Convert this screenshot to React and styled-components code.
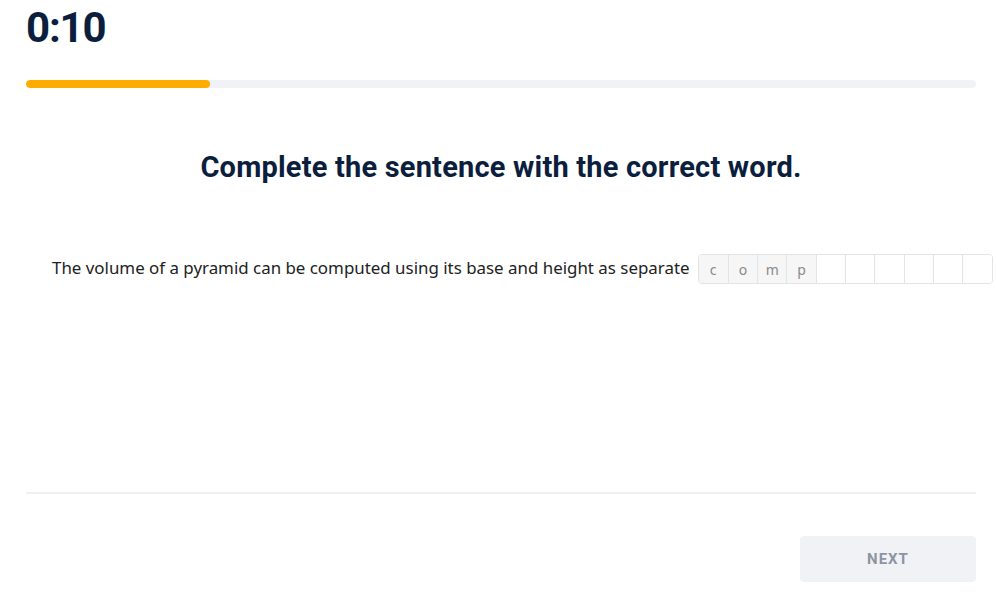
import React from 'react';
import styled, { createGlobalStyle } from 'styled-components';

const GlobalStyle = createGlobalStyle`
  html, body {
    margin: 0;
    padding: 0;
    background: #ffffff;
  }
  body {
    font-family: 'Noto Sans', 'Open Sans', sans-serif;
    overflow: hidden;
  }
`;

const Page = styled.div`
  width: 996px;
  height: 592px;
  box-sizing: border-box;
  padding: 0 20px 0 26px;
  display: flex;
  flex-direction: column;
`;

const Timer = styled.div`
  font-family: Roboto, 'Liberation Sans', sans-serif;
  font-weight: 700;
  font-size: 42px;
  line-height: 52px;
  letter-spacing: -1.2px;
  color: #0b1e3d;
  margin-top: 2px;
`;

const Track = styled.div`
  margin-top: 26px;
  height: 8px;
  border-radius: 4px;
  background: #f0f2f5;
  overflow: hidden;
`;

const Fill = styled.div`
  height: 100%;
  border-radius: 4px;
  background: #ffab00;
`;

const Heading = styled.h2`
  margin: 60px 0 0;
  text-align: center;
  font-family: Roboto, 'Liberation Sans', sans-serif;
  font-weight: 700;
  font-size: 29px;
  line-height: 38px;
  letter-spacing: 0.2px;
  color: #0b1e3d;
`;

const SentenceRow = styled.div`
  margin-top: 68px;
  padding-left: 26px;
  display: flex;
  align-items: center;
  gap: 8px;
  white-space: nowrap;
  height: 30px;
`;

const Sentence = styled.span`
  font-size: 16.9px;
  line-height: 26px;
  margin-top: -3px;
  color: #222;
`;

const Boxes = styled.div`
  display: flex;
  border: 1px solid #e4e4e4;
  border-radius: 4px;
  overflow: hidden;
  flex-shrink: 0;
`;

const LetterBox = styled.div`
  width: 29.3px;
  height: 28px;
  box-sizing: border-box;
  display: flex;
  align-items: center;
  justify-content: center;
  font-size: 14px;
  color: #8a8a8a;
  background: ${p => (p.$filled ? '#f6f6f6' : '#ffffff')};
  & + & {
    border-left: 1px solid #e4e4e4;
  }
`;

const Spacer = styled.div`
  flex: 1;
`;

const Divider = styled.hr`
  margin: 0;
  border: none;
  height: 2px;
  background: #eef0f3;
`;

const Footer = styled.div`
  display: flex;
  justify-content: flex-end;
  padding: 42px 0 10px;
`;

const NextButton = styled.button`
  width: 176px;
  height: 46px;
  border: none;
  border-radius: 4px;
  background: #f0f2f5;
  color: #8c95a1;
  font-family: Roboto, 'Liberation Sans', sans-serif;
  font-weight: 700;
  font-size: 15px;
  letter-spacing: 1px;
  cursor: not-allowed;
`;

const letters = ['c', 'o', 'm', 'p', '', '', '', '', '', ''];

export default function App() {
  return (
    <>
      <GlobalStyle />
      <Page>
        <Timer>0:10</Timer>
        <Track>
          <Fill style={{ width: '19.4%' }} />
        </Track>
        <Heading>Complete the sentence with the correct word.</Heading>
        <SentenceRow>
          <Sentence>The volume of a pyramid can be computed using its base and height as separate</Sentence>
          <Boxes>
            {letters.map((l, i) => (
              <LetterBox key={i} $filled={!!l}>{l}</LetterBox>
            ))}
          </Boxes>
        </SentenceRow>
        <Spacer />
        <Divider />
        <Footer>
          <NextButton disabled>NEXT</NextButton>
        </Footer>
      </Page>
    </>
  );
}
